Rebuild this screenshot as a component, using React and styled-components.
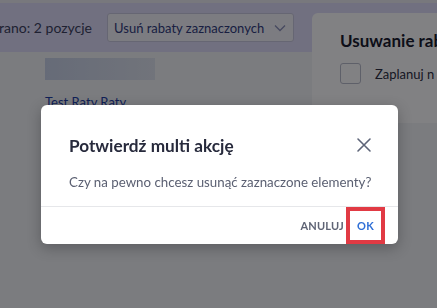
import React from 'react';
import styled, { createGlobalStyle } from 'styled-components';

const GlobalStyle = createGlobalStyle`
  html, body {
    margin: 0;
    padding: 0;
    background: #f2f4f7;
    font-family: "Source Sans Pro", "Lato", "Liberation Sans", sans-serif;
    overflow: hidden;
  }
  #root {
    width: 437px;
    height: 308px;
  }
`;

function CloseIcon() {
  return (
    <svg width="16" height="16" viewBox="0 0 16 16" fill="none">
      <path d="M2 2L14 14M14 2L2 14" stroke="#5d6478" strokeWidth="1.6" strokeLinecap="round" />
    </svg>
  );
}

function Chevron() {
  return (
    <svg width="12" height="8" viewBox="0 0 12 8" fill="none">
      <path d="M1 1.5L6 6.5L11 1.5" stroke="#8a8fb8" strokeWidth="1.3" />
    </svg>
  );
}

function App() {
  return (
    <>
      <GlobalStyle />
      <Page>
        <TopStrip />
        <Toolbar>
          <Counter><span>Wybrano: 2 pozycje</span></Counter>
          <Select>
            <span>Usuń rabaty zaznaczonych</span>
            <Chevron />
          </Select>
        </Toolbar>
        <Content>
          <Skeleton />
          <RowLink>Test Raty Raty</RowLink>
        </Content>

        <SidePanel>
          <PanelTitle>Usuwanie rab</PanelTitle>
          <CheckRow>
            <Checkbox />
            <span>Zaplanuj n</span>
          </CheckRow>
        </SidePanel>
      </Page>

      <Backdrop>
        <Modal>
          <ModalHeader>
            <ModalTitle>Potwierdź multi akcję</ModalTitle>
            <CloseButton><CloseIcon /></CloseButton>
          </ModalHeader>
          <ModalBody>Czy na pewno chcesz usunąć zaznaczone elementy?</ModalBody>
          <ModalFooter>
            <TextButton>ANULUJ</TextButton>
            <TextButton $primary $highlight>OK</TextButton>
          </ModalFooter>
        </Modal>
      </Backdrop>
    </>
  );
}

export default App;

const Page = styled.div`
  position: relative;
  height: 308px;
  background: #f2f4f7;
`;

const TopStrip = styled.div`
  height: 3px;
  background: #ececf3;
`;

const Toolbar = styled.div`
  height: 49px;
  background: #dfdcf9;
  display: flex;
  align-items: center;
  gap: 15px;
`;

const Counter = styled.div`
  width: 92px;
  flex-shrink: 0;
  display: flex;
  justify-content: flex-end;
  overflow: hidden;
  white-space: nowrap;
  font-size: 14px;
  color: #3a3f5c;
`;

const Select = styled.div`
  width: 187px;
  height: 29px;
  flex-shrink: 0;
  box-sizing: border-box;
  border: 1px solid #c9c9df;
  border-radius: 3px;
  background: #f4f4fa;
  display: flex;
  align-items: center;
  justify-content: space-between;
  padding: 0 7px 0 6px;
  font-size: 13px;
  white-space: nowrap;
  color: #2f3a7a;
`;

const Content = styled.div`
  padding: 6px 0 0 45px;
`;

const Skeleton = styled.div`
  width: 110px;
  height: 22px;
  background: linear-gradient(90deg, #c9d3e8, #dfe4ee);
`;

const RowLink = styled.div`
  margin-top: 14px;
  font-size: 13px;
  color: #1d3fa8;
`;

const SidePanel = styled.div`
  position: absolute;
  left: 312px;
  top: 13px;
  width: 125px;
  height: 110px;
  background: #ffffff;
  border-radius: 6px 0 0 6px;
  padding: 17px 0 0 28px;
  box-sizing: border-box;
  overflow: hidden;
`;

const PanelTitle = styled.div`
  font-size: 17px;
  font-weight: 700;
  color: #16182a;
  white-space: nowrap;
`;

const CheckRow = styled.div`
  margin-top: 12px;
  display: flex;
  align-items: center;
  gap: 14px;
  font-size: 13px;
  color: #2a2d40;
  white-space: nowrap;
`;

const Checkbox = styled.div`
  width: 21px;
  height: 21px;
  flex-shrink: 0;
  box-sizing: border-box;
  border: 1px solid #b9bccb;
  border-radius: 3px;
  background: #fff;
`;

const Backdrop = styled.div`
  position: fixed;
  inset: 0;
  background: rgba(4, 4, 8, 0.5);
  display: flex;
  justify-content: flex-start;
  align-items: flex-start;
  padding: 105px 0 0 41px;
`;

const Modal = styled.div`
  width: 357px;
  height: 139px;
  background: #fff;
  border-radius: 6px;
  box-shadow: 0 4px 14px rgba(0, 0, 0, 0.25);
  display: flex;
  flex-direction: column;
`;

const ModalHeader = styled.div`
  display: flex;
  align-items: center;
  justify-content: space-between;
  padding: 28px 26px 0 28px;
  height: 26px;
`;

const ModalTitle = styled.div`
  font-size: 17.2px;
  font-weight: 700;
  color: #272a3c;
`;

const CloseButton = styled.div`
  display: flex;
  align-items: center;
`;

const ModalBody = styled.div`
  padding: 15px 28px 0 28px;
  height: 35px;
  font-size: 13.3px;
  white-space: nowrap;
  color: #5b6072;
  border-bottom: 1px solid #e6e7ea;
  line-height: 18px;
`;

const ModalFooter = styled.div`
  flex: 1;
  display: flex;
  justify-content: flex-end;
  align-items: center;
  padding-right: 13px;
`;

const TextButton = styled.div`
  box-sizing: border-box;
  height: 37px;
  display: flex;
  align-items: center;
  justify-content: center;
  font-size: 11px;
  font-weight: 700;
  letter-spacing: 0.2px;
  color: ${p => (p.$primary ? '#2f6fd6' : '#5f6475')};
  border: ${p => (p.$highlight ? '4px solid #e13a44' : 'none')};
  padding: ${p => (p.$highlight ? '0 6px' : '0 2px')};
  width: ${p => (p.$highlight ? '39px' : 'auto')};
`;
